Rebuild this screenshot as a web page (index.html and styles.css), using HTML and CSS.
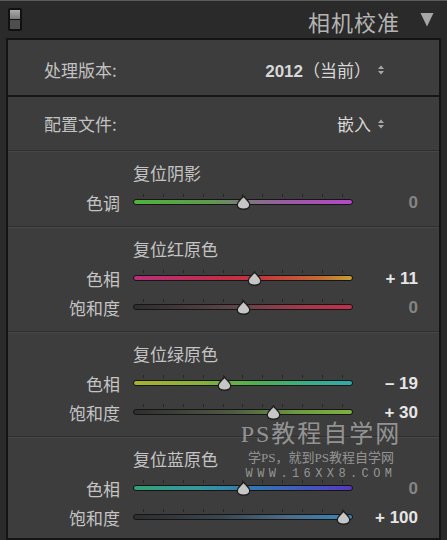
FILE: index.html
```html
<!DOCTYPE html>
<html lang="zh">
<head>
<meta charset="utf-8">
<link rel="stylesheet" href="styles.css">
</head>
<body>
<div class="app">
  <header class="header">
    <span class="switch"><span class="switch-on"></span><span class="switch-off"></span></span>
    <h1 class="title">相机校准</h1>
    <svg class="collapse" viewBox="0 0 14 15"><polygon points="0.5,1 13.5,1 7,14.5"/></svg>
  </header>
  <div class="panel">
    <div class="row row-process">
      <span class="row-label">处理版本:</span>
      <span class="row-value"><b class="num">2012</b>（当前）</span>
      <svg class="updown" viewBox="0 0 8 12"><polygon points="1,5 4,1.5 7,5"/><polygon points="1,7 4,10.5 7,7"/></svg>
    </div>
    <div class="row row-profile">
      <span class="row-label">配置文件:</span>
      <span class="row-value">嵌入</span>
      <svg class="updown" viewBox="0 0 8 12"><polygon points="1,5 4,1.5 7,5"/><polygon points="1,7 4,10.5 7,7"/></svg>
    </div>

    <section class="group">
      <div class="group-title">复位阴影</div>
      <div class="slider-row">
        <span class="s-label">色调</span>
        <div class="slider">
          <div class="ticks"><i></i><i></i><i></i><i></i><i></i><i></i><i></i><i></i><i></i><i></i><i></i></div>
          <div class="track tr-tint"></div>
          <svg class="thumb" style="left:103px" viewBox="0 0 14 14"><path d="M7 .8C8.2 3.3 12.8 5.8 12.8 9.2 12.8 11.8 10.3 13.3 7 13.3S1.2 11.8 1.2 9.2C1.2 5.8 5.8 3.3 7 .8Z"/></svg>
        </div>
        <span class="s-value zero">0</span>
      </div>
    </section>

    <section class="group">
      <div class="group-title">复位红原色</div>
      <div class="slider-row">
        <span class="s-label">色相</span>
        <div class="slider">
          <div class="ticks"><i></i><i></i><i></i><i></i><i></i><i></i><i></i><i></i><i></i><i></i><i></i></div>
          <div class="track tr-red-hue"></div>
          <svg class="thumb" style="left:114px" viewBox="0 0 14 14"><path d="M7 .8C8.2 3.3 12.8 5.8 12.8 9.2 12.8 11.8 10.3 13.3 7 13.3S1.2 11.8 1.2 9.2C1.2 5.8 5.8 3.3 7 .8Z"/></svg>
        </div>
        <span class="s-value">+ 11</span>
      </div>
      <div class="slider-row">
        <span class="s-label">饱和度</span>
        <div class="slider">
          <div class="ticks"><i></i><i></i><i></i><i></i><i></i><i></i><i></i><i></i><i></i><i></i><i></i></div>
          <div class="track tr-red-sat"></div>
          <svg class="thumb" style="left:103px" viewBox="0 0 14 14"><path d="M7 .8C8.2 3.3 12.8 5.8 12.8 9.2 12.8 11.8 10.3 13.3 7 13.3S1.2 11.8 1.2 9.2C1.2 5.8 5.8 3.3 7 .8Z"/></svg>
        </div>
        <span class="s-value zero">0</span>
      </div>
    </section>

    <section class="group">
      <div class="group-title">复位绿原色</div>
      <div class="slider-row">
        <span class="s-label">色相</span>
        <div class="slider">
          <div class="ticks"><i></i><i></i><i></i><i></i><i></i><i></i><i></i><i></i><i></i><i></i><i></i></div>
          <div class="track tr-green-hue"></div>
          <svg class="thumb" style="left:84px" viewBox="0 0 14 14"><path d="M7 .8C8.2 3.3 12.8 5.8 12.8 9.2 12.8 11.8 10.3 13.3 7 13.3S1.2 11.8 1.2 9.2C1.2 5.8 5.8 3.3 7 .8Z"/></svg>
        </div>
        <span class="s-value">– 19</span>
      </div>
      <div class="slider-row">
        <span class="s-label">饱和度</span>
        <div class="slider">
          <div class="ticks"><i></i><i></i><i></i><i></i><i></i><i></i><i></i><i></i><i></i><i></i><i></i></div>
          <div class="track tr-green-sat"></div>
          <svg class="thumb" style="left:133px" viewBox="0 0 14 14"><path d="M7 .8C8.2 3.3 12.8 5.8 12.8 9.2 12.8 11.8 10.3 13.3 7 13.3S1.2 11.8 1.2 9.2C1.2 5.8 5.8 3.3 7 .8Z"/></svg>
        </div>
        <span class="s-value">+ 30</span>
      </div>
    </section>

    <section class="group">
      <div class="group-title">复位蓝原色</div>
      <div class="slider-row">
        <span class="s-label">色相</span>
        <div class="slider">
          <div class="ticks"><i></i><i></i><i></i><i></i><i></i><i></i><i></i><i></i><i></i><i></i><i></i></div>
          <div class="track tr-blue-hue"></div>
          <svg class="thumb" style="left:103px" viewBox="0 0 14 14"><path d="M7 .8C8.2 3.3 12.8 5.8 12.8 9.2 12.8 11.8 10.3 13.3 7 13.3S1.2 11.8 1.2 9.2C1.2 5.8 5.8 3.3 7 .8Z"/></svg>
        </div>
        <span class="s-value zero">0</span>
      </div>
      <div class="slider-row">
        <span class="s-label">饱和度</span>
        <div class="slider">
          <div class="ticks"><i></i><i></i><i></i><i></i><i></i><i></i><i></i><i></i><i></i><i></i><i></i></div>
          <div class="track tr-blue-sat"></div>
          <svg class="thumb" style="left:203px" viewBox="0 0 14 14"><path d="M7 .8C8.2 3.3 12.8 5.8 12.8 9.2 12.8 11.8 10.3 13.3 7 13.3S1.2 11.8 1.2 9.2C1.2 5.8 5.8 3.3 7 .8Z"/></svg>
        </div>
        <span class="s-value">+ 100</span>
      </div>
    </section>
  </div>

  <div class="watermark">
    <div class="wm-big">PS教程自学网</div>
    <div class="wm-small">学PS，就到PS教程自学网</div>
    <div class="wm-url">WWW.16XX8.COM</div>
  </div>
</div>
</body>
</html>
```
FILE: styles.css
```css
* { box-sizing: border-box; margin: 0; padding: 0; }
html, body { width: 447px; height: 540px; overflow: hidden; background: #2a2a2a; }
body { font-family: "Noto Sans CJK SC", "Noto Sans", sans-serif; color: #c4c4c4; }

.app { position: relative; width: 447px; height: 540px; overflow: hidden; }

.header {
  height: 38px;
  border-top: 1px solid #5c5c5c;
  display: flex;
  align-items: center;
  padding: 0 13px 0 8px;
  background: #2a2a2a;
}
.switch {
  width: 14px; height: 23px;
  border: 2px solid #111;
  border-radius: 2px;
  background: #111;
  display: flex; flex-direction: column; gap: 1px;
}
.switch-on { flex: 1; background: linear-gradient(#ababab, #7a7a7a); }
.switch-off { flex: 1; background: #4e4e4e; }
.title {
  margin-left: auto;
  font-size: 22px; font-weight: 400; line-height: 1;
  color: #b4b4b4; letter-spacing: 1px;
  position: relative; top: 1px;
}
.collapse { margin-left: 20px; width: 14px; height: 15px; fill: #a6a6a6; }

.panel {
  margin: 0 6px;
  height: 502px;
  border: 2px solid #141414;
  background: #3d3d3d;
  overflow: hidden;
}

.row {
  display: flex; align-items: center;
  padding: 0 54px 0 36px;
  font-size: 17px;
}
.row-process { height: 57px; padding-top: 4px; border-bottom: 2px solid #171717; }
.row-profile { height: 53px; }
.row-label { flex: 1; color: #c2c2c2; }
.row-value { color: #d8d8d8; }
.num { font-family: "Liberation Sans", sans-serif; font-weight: bold; }
.updown { margin-left: 6px; width: 8px; height: 12px; fill: #a8a8a8; }

.group {
  border-top: 1px solid #2e2e2e;
  box-shadow: inset 0 1px 0 #484848;
  padding: 10px 0 9px;
}
.group-title {
  padding-left: 125px;
  height: 24px; line-height: 24px;
  font-size: 17px; color: #c4c4c4;
  margin-bottom: 3px;
}
.slider-row { display: flex; align-items: center; height: 29px; }
.s-label {
  width: 112px; text-align: right;
  font-size: 17px; line-height: 29px; color: #c4c4c4;
}
.slider {
  position: relative;
  width: 220px; height: 29px;
  margin-left: 13px;
  padding-top: 6px;
}
.ticks {
  display: flex; justify-content: space-between;
  padding: 0 10px;
  height: 3px; margin-bottom: 2px;
}
.ticks i { display: block; width: 1px; height: 3px; background: #262626; }
.track {
  height: 6px;
  border: 1px solid #151515;
  border-radius: 3px;
}
.thumb {
  position: absolute; top: 7px;
  width: 15px; height: 15px;
  fill: #c6c6c6; stroke: #1e1e1e; stroke-width: 1.2;
}
.s-value {
  width: 65px; text-align: right;
  font-family: "Liberation Sans", sans-serif; font-weight: bold;
  font-size: 17px; color: #e6e6e6;
}
.s-value.zero { color: #858585; }

.tr-tint { background: linear-gradient(90deg, #4fb43c 0%, #5e9a4e 35%, #7a7a7a 50%, #9a5aa4 70%, #b547c6 100%); }
.tr-red-hue { background: linear-gradient(90deg, #b8307c 0%, #c42c48 40%, #c8383a 60%, #c46a32 85%, #c4a032 100%); }
.tr-red-sat { background: linear-gradient(90deg, #2e2e2e 0%, #5e4448 45%, #a3384a 75%, #c2304a 100%); }
.tr-green-hue { background: linear-gradient(90deg, #aab030 0%, #88b03a 30%, #52ae4e 55%, #38ae88 80%, #30aaaa 100%); }
.tr-green-sat { background: linear-gradient(90deg, #2e2e2e 0%, #4e5a44 45%, #6e9a40 75%, #80b040 100%); }
.tr-blue-hue { background: linear-gradient(90deg, #32a276 0%, #3498a0 30%, #3476b2 55%, #4456bc 80%, #5838c2 100%); }
.tr-blue-sat { background: linear-gradient(90deg, #2e2e2e 0%, #3a4650 40%, #4a6c88 70%, #3a86c0 100%); }

.watermark {
  position: absolute; left: 226px; top: 421px;
  width: 190px;
  display: flex; flex-direction: column; align-items: center;
  color: rgba(205, 205, 205, 0.62);
  white-space: nowrap;
  pointer-events: none;
}
.wm-big {
  font-family: "Liberation Serif", "Noto Sans CJK SC", serif;
  font-size: 24px; line-height: 26px; letter-spacing: 2px;
}
.wm-small {
  margin-top: 3px;
  font-family: "Liberation Serif", "Noto Sans CJK SC", serif;
  font-size: 13px; line-height: 15px;
}
.wm-url {
  margin-top: 2px;
  font-family: "Liberation Mono", monospace;
  font-size: 12px; line-height: 14px; letter-spacing: 4.4px;
}
```
